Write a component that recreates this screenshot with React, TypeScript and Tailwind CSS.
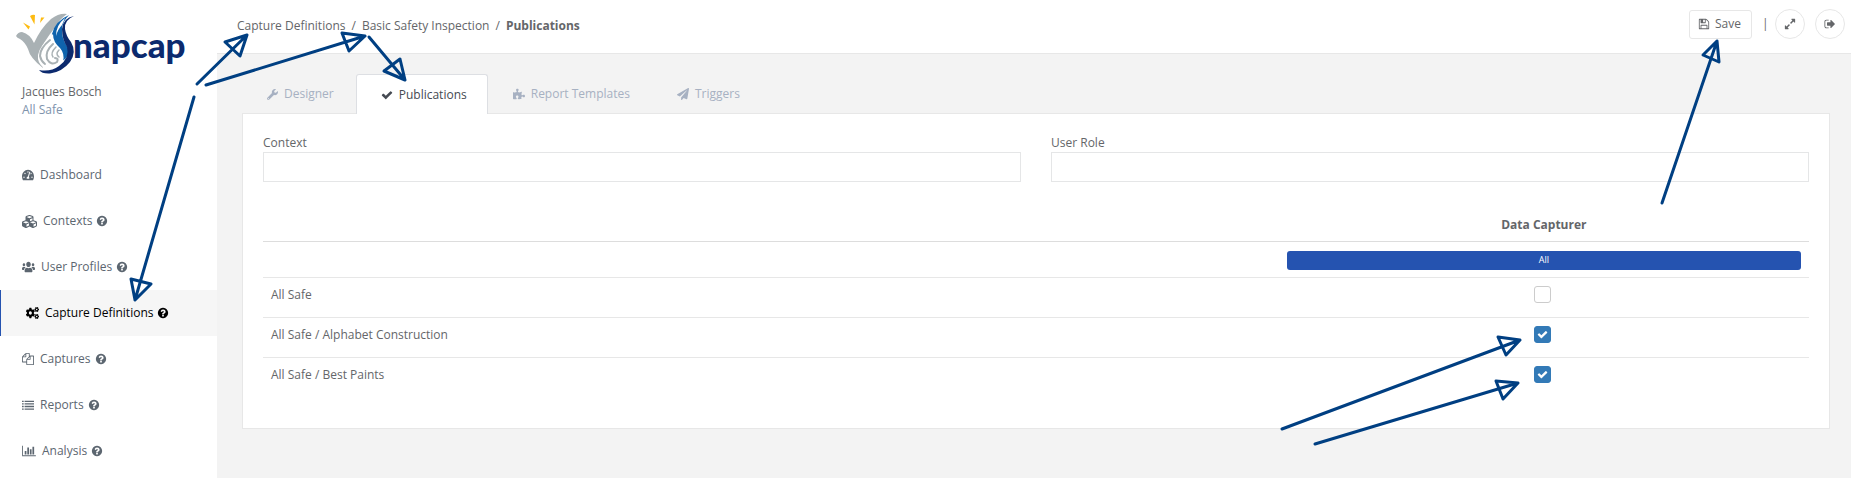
import { useState } from "react";
import type { ReactNode } from "react";
import {
  FaCogs,
  FaCubes,
  FaPaperPlane,
  FaPuzzlePiece,
  FaTachometerAlt,
  FaUsers,
  FaWrench,
} from "react-icons/fa";

const PATHS = {
  help: "M1024 1376v-192q0-14-9-23t-23-9h-192q-14 0-23 9t-9 23v192q0 14 9 23t23 9h192q14 0 23-9t9-23zm256-672q0-88-55.5-163t-138.5-116-170-41q-243 0-371 213-15 24 8 42l132 100q7 6 19 6 16 0 25-12 53-68 86-92 34-24 86-24 48 0 85.5 26t37.5 59q0 38-20 61t-68 45q-63 28-115.5 86.5t-52.5 125.5v36q0 14 9 23t23 9h192q14 0 23-9t9-23q0-19 21.5-49.5t54.5-49.5q32-18 49-28.5t46-35 44.5-48 28-60.5 12.5-81zm384 192q0 209-103 385.5t-279.5 279.5-385.5 103-385.5-103-279.5-279.5-103-385.5 103-385.5 279.5-279.5 385.5-103 385.5 103 279.5 279.5 103 385.5z",
  check:
    "M1671 566q0 40-28 68l-724 724-136 136q-28 28-68 28t-68-28l-136-136-362-362q-28-28-28-68t28-68l136-136q28-28 68-28t68 28l294 295 656-657q28-28 68-28t68 28l136 136q28 28 28 68z",
  files:
    "M1696 384q40 0 68 28t28 68v1216q0 40-28 68t-68 28h-960q-40 0-68-28t-28-68v-288h-544q-40 0-68-28t-28-68v-672q0-40 20-88t48-76l408-408q28-28 76-48t88-20h416q40 0 68 28t28 68v328q68-40 128-40h416zm-544 213l-299 299h299v-299zm-640-384l-299 299h299v-299zm196 647l316-316v-416h-384v416q0 40-28 68t-68 28h-416v640h512v-256q0-40 20-88t48-76zm956 804v-1152h-384v416q0 40-28 68t-68 28h-416v640h896z",
  list: "M0 256h256v192H0zM384 256h1408v192H384zM0 640h256v192H0zM384 640h1408v192H384zM0 1024h256v192H0zM384 1024h1408v192H384zM0 1408h256v192H0zM384 1408h1408v192H384z",
  chart:
    "M640 896v512h-256v-512h256zm384-512v1024h-256v-1024h256zm1024 1152v128h-2048v-1536h128v1408h1920zm-640-896v768h-256v-768h256zm384-384v1152h-256v-1152h256z",
  save: "M512 1536h768v-384h-768v384zm896 0h128v-896q0-14-10-38.5t-20-34.5l-281-281q-10-10-34-20t-39-10v416q0 40-28 68t-68 28h-576q-40 0-68-28t-28-68v-416h-128v1280h128v-416q0-40 28-68t68-28h832q40 0 68 28t28 68v416zm-384-928v-320q0-13-9.5-22.5t-22.5-9.5h-192q-13 0-22.5 9.5t-9.5 22.5v320q0 13 9.5 22.5t22.5 9.5h192q13 0 22.5-9.5t9.5-22.5zm640 32v928q0 40-28 68t-68 28h-1344q-40 0-68-28t-28-68v-1344q0-40 28-68t68-28h928q40 0 88 20t76 48l280 280q28 28 48 76t20 88z",
  expand:
    "M883 1056q0 13-10 23l-332 332 144 144q19 19 19 45t-19 45-45 19h-448q-26 0-45-19t-19-45v-448q0-26 19-45t45-19 45 19l144 144 332-332q10-10 23-10t23 10l114 114q10 10 10 23zm781-864v448q0 26-19 45t-45 19-45-19l-144-144-332 332q-10 10-23 10t-23-10l-114-114q-10-10-10-23t10-23l332-332-144-144q-19-19-19-45t19-45 45-19h448q26 0 45 19t19 45z",
  signOut:
    "M704 1440q0 4 1 20t.5 26.5-3 23.5-10 19.5-20.5 6.5h-320q-119 0-203.5-84.5t-84.5-203.5v-704q0-119 84.5-203.5t203.5-84.5h320q13 0 22.5 9.5t9.5 22.5q0 4 1 20t.5 26.5-3 23.5-10 19.5-20.5 6.5h-320q-66 0-113 47t-47 113v704q0 66 47 113t113 47h312l11.5 1 11.5 3 8 5.5 7 9 2 13.5zm928-544q0 26-19 45l-544 544q-19 19-45 19t-45-19-19-45v-288h-448q-26 0-45-19t-19-45v-384q0-26 19-45t45-19h448v-288q0-26 19-45t45-19 45 19l544 544q19 19 19 45z",
};

function Icon({ name, className = "size-3" }: { name: keyof typeof PATHS; className?: string }) {
  const width = name === "chart" ? 2048 : 1792;
  return (
    <svg viewBox={`0 0 ${width} 1792`} fill="currentColor" className={className} aria-hidden="true">
      <path d={PATHS[name]} />
    </svg>
  );
}

const NAV: { label: string; icon: ReactNode; help: boolean }[] = [
  { label: "Dashboard", icon: <FaTachometerAlt className="size-3" preserveAspectRatio="none" />, help: false },
  { label: "Contexts", icon: <FaCubes className="size-[15px]" />, help: true },
  { label: "User Profiles", icon: <FaUsers className="h-3 w-[13px]" preserveAspectRatio="none" />, help: true },
  { label: "Capture Definitions", icon: <FaCogs className="h-3 w-[13px]" preserveAspectRatio="none" />, help: true },
  { label: "Captures", icon: <Icon name="files" />, help: true },
  { label: "Reports", icon: <Icon name="list" />, help: true },
  { label: "Analysis", icon: <Icon name="chart" className="h-3 w-[14px]" />, help: true },
];

const TABS: { label: string; icon: ReactNode }[] = [
  { label: "Designer", icon: <FaWrench className="size-[11px]" /> },
  { label: "Publications", icon: <Icon name="check" /> },
  { label: "Report Templates", icon: <FaPuzzlePiece className="size-3" /> },
  { label: "Triggers", icon: <FaPaperPlane className="size-3" /> },
];

function Logo() {
  return (
    <svg viewBox="0 0 180 66" className="h-[66px] w-[180px]" role="img" aria-label="Snapcap">
      <g fill="#fdbb12">
        <path d="M7 14.500 L14 18.500 L12.500 21.500 Z" />
        <path d="M14 8 Q17 6 19 7 L18.500 16.500 Z" />
        <path d="M28.500 9.500 L24 15 L25 9.500 Z" />
      </g>
      <path
        fill="#a9b1b4"
        d="M0 28 Q2 24 6 24 Q14 26 18 35 Q25 20 35 11 Q43 5 51 6 Q44 11 40 18 Q33 27 28 35 Q22 44 27 60 Q14 50 12 41 Q9 34 4 31 Q1 30 0 28 Z"
      />
      <path fill="#0f63ad" d="M53 7 Q39 13 36 26 Q35 32 39 36 L46 53 Q54 49 52 40 Q45 30 46 20 Q47 13 53 7 Z" />
      <path fill="#fff" d="M49 10 Q40 17 40 28 Q42 21 46 17 Z" />
      <path
        fill="#0c2a6e"
        d="M58 8 Q48 12 49 21 Q50 28 55 34 Q61 44 54 54 Q46 64 34 65.500 Q26 66 23 62 Q35 64 43 58 Q54 50 51 39 Q46 31 46 21 Q47 10 58 8 Z"
      />
      <path fill="#fff" d="M37 26 Q24 37 22 47 Q21 55 28 60 Q39 62 47 53 Q49 46 44 40 Q37 34 37 26 Z" />
      <g fill="none" stroke="#a9b1b4" strokeLinecap="round">
        <path strokeWidth="2" d="M34 32 Q24 40 24 48 Q25 53 29 56" />
        <path strokeWidth="2" d="M37 36 Q29 43 31 51 Q35 58 41 54 Q43 50 39 50" />
        <path strokeWidth="1.500" d="M40 39 Q34 45 37 49 M43 42 Q39 46 43 49" />
      </g>
      <text x="57" y="50" fill="#0c2a6e" fontSize="35" className="font-['Lato',sans-serif] font-black">
        napcap
      </text>
    </svg>
  );
}

function Sidebar() {
  return (
    <aside className="w-[217px] shrink-0 bg-white">
      <div className="flex h-[152px] flex-col pl-4 pt-2">
        <Logo />
        <div className="mt-[9px] pl-[6px] leading-[18px]">
          <p className="font-medium">Jacques Bosch</p>
          <p className="text-[#7e93ac]">All Safe</p>
        </div>
      </div>
      <nav>
        {NAV.map(({ label, icon, help }) => {
          const active = label === "Capture Definitions";
          return (
            <a
              key={label}
              href="#"
              className={
                active
                  ? "flex h-[46px] items-center border-l border-[#2553b0] bg-[#f6f6f6] pl-[25px] text-black"
                  : "flex h-[46px] items-center pl-[22px] text-[#5c6670]"
              }
            >
              {icon}
              <span className="ml-[6px]">{label}</span>
              {help && <Icon name="help" className="ml-1 size-3" />}
            </a>
          );
        })}
      </nav>
    </aside>
  );
}

function Header() {
  return (
    <header className="flex h-[54px] items-start justify-between border-b border-[#e7e7e7] bg-white pl-5 pr-[6px] pt-[9px]">
      <nav className="flex gap-[6px] pt-2 leading-[18px]" aria-label="Breadcrumb">
        <a href="#">Capture Definitions</a>
        <span>/</span>
        <a href="#">Basic Safety Inspection</a>
        <span>/</span>
        <strong>Publications</strong>
      </nav>
      <div className="flex items-center">
        <button className="flex h-[29px] items-center gap-[5px] rounded-[3px] border border-[#e7e7e7] pl-2 pr-[10px]">
          <Icon name="save" />
          Save
        </button>
        <span className="mx-[10px] w-[3px]">|</span>
        <button
          aria-label="Full screen"
          className="flex size-[30px] items-center justify-center rounded-full border border-[#e7e7e7]"
        >
          <Icon name="expand" />
        </button>
        <button
          aria-label="Sign out"
          className="ml-[10px] flex size-[30px] items-center justify-center rounded-full border border-[#e7e7e7]"
        >
          <Icon name="signOut" />
        </button>
      </div>
    </header>
  );
}

function Field({ id, label }: { id: string; label: string }) {
  return (
    <div className="flex flex-1 flex-col">
      <label htmlFor={id} className="leading-[18px]">
        {label}
      </label>
      <input id={id} type="text" className="h-[30px] border border-[#e5e6e7] px-3 outline-none" />
    </div>
  );
}

const CONTEXTS = ["All Safe", "All Safe / Alphabet Construction", "All Safe / Best Paints"];

function PublicationsTable() {
  const [checked, setChecked] = useState([false, true, true]);
  return (
    <table className="mt-[26px] w-full table-fixed border-collapse">
      <colgroup>
        <col />
        <col className="w-[34.3%]" />
      </colgroup>
      <thead>
        <tr className="h-[33px] border-b border-[#dddddd]">
          <td />
          <th className="px-2 pb-[7px] pt-2 leading-[18px] font-bold">Data Capturer</th>
        </tr>
      </thead>
      <tbody>
        <tr className="h-9 border-b border-[#e7e7e7]">
          <td />
          <td className="px-2 pt-px">
            <button
              onClick={() => setChecked([true, true, true])}
              className="block h-[19px] w-full rounded-[3px] bg-[#2553b0] text-[9px] text-white"
            >
              All
            </button>
          </td>
        </tr>
        {CONTEXTS.map((name, i) => (
          <tr key={name} className="h-10 border-b border-[#e7e7e7] last:border-b-0">
            <td className="px-2 pt-2 align-top leading-[18px]">
              <label htmlFor={`context-${i}`}>{name}</label>
            </td>
            <td className="pl-2 pr-[10px] pt-2 align-top">
              <span className="relative mx-auto block size-[17px]">
                <input
                  id={`context-${i}`}
                  type="checkbox"
                  checked={checked[i]}
                  onChange={() => setChecked(checked.map((c, j) => (j === i ? !c : c)))}
                  className="block size-[17px] appearance-none rounded-[3px] border border-[#cccccc] bg-white checked:border-[#337ab7] checked:bg-[#337ab7]"
                />
                {checked[i] && (
                  <span className="pointer-events-none absolute inset-0 flex items-center justify-center text-white">
                    <Icon name="check" className="size-[11px]" />
                  </span>
                )}
              </span>
            </td>
          </tr>
        ))}
      </tbody>
    </table>
  );
}

const ARROWS = [
  "M197 84 L247 35 L225 42 L240 56 L247 35",
  "M206 85 L365 36 L342 33 L349 51 L365 36",
  "M369 37 L405 80 L384 71 L400 59 L405 80",
  "M194 97 L135 300 L131 279 L151 284 L135 300",
  "M1662 203 L1717 41 L1703 55 L1719 62 L1717 41",
  "M1282 429 L1520 340 L1498 337 L1506 355 L1520 340",
  "M1315 444 L1518 383 L1496 381 L1503 399 L1518 383",
];

function Arrows() {
  return (
    <svg
      viewBox="0 0 1851 478"
      className="pointer-events-none absolute left-0 top-0 z-20 h-[478px] w-[1851px]"
      aria-hidden="true"
    >
      <g fill="none" stroke="#003f82" strokeWidth="3" strokeLinejoin="round" strokeLinecap="round">
        {ARROWS.map((d) => (
          <path key={d} d={d} />
        ))}
      </g>
    </svg>
  );
}

export default function App() {
  return (
    <div className="relative flex min-h-screen overflow-hidden bg-[#f3f3f3] font-['Open_Sans',sans-serif] text-[12px] text-[#646669]">
      <Sidebar />
      <main className="min-w-0 flex-1">
        <Header />
        <div className="pl-[25px] pr-[21px] pt-5">
          <div role="tablist" className="flex h-[39px]">
            {TABS.map(({ label, icon }) => {
              const active = label === "Publications";
              return (
                <button
                  key={label}
                  role="tab"
                  aria-selected={active}
                  className={
                    active
                      ? "z-10 flex h-10 items-center gap-[6px] rounded-t-[3px] border border-b-0 border-[#dddfe3] bg-white px-[24px] pr-5 text-[#454a52]"
                      : "flex h-10 items-center gap-[6px] pl-[25px] pr-[22px] text-[#a7b1c2]"
                  }
                >
                  {icon}
                  {label}
                </button>
              );
            })}
          </div>
          <section className="border border-[#e7e7e7] bg-white px-5 pb-[30px] pt-5">
            <div className="flex gap-[30px]">
              <Field id="context" label="Context" />
              <Field id="role" label="User Role" />
            </div>
            <PublicationsTable />
          </section>
        </div>
      </main>
      <Arrows />
    </div>
  );
}
